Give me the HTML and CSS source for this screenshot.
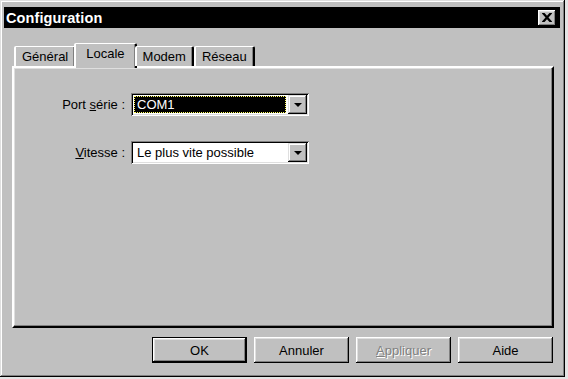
FILE: index.html
```html
<!DOCTYPE html>
<html lang="fr">
<head>
<meta charset="utf-8">
<title>Configuration</title>
<link rel="stylesheet" href="styles.css">
</head>
<body>
<div class="window">
  <div class="titlebar">
    <span class="title">Configuration</span>
    <span class="close-btn">
      <svg width="10" height="9" viewBox="0 0 10 9"><path d="M0 0h2.5L5 2.7 7.5 0H10v.6L6.5 4.5 10 8.4V9H7.5L5 6.3 2.5 9H0v-.6l3.5-3.9L0 .6z" fill="#000"/></svg>
    </span>
  </div>
  <div class="content">
    <div class="tabs">
      <div class="tab">Général</div>
      <div class="tab tab-active">Locale</div>
      <div class="tab">Modem</div>
      <div class="tab">Réseau</div>
    </div>
    <div class="panel">
      <div class="form">
        <label class="label">Port <u>s</u>érie :</label>
        <div class="combo">
          <div class="combo-field"><span class="selected">COM1</span></div>
          <div class="combo-btn"><span class="arrow"></span></div>
        </div>
        <label class="label"><u>V</u>itesse :</label>
        <div class="combo">
          <div class="combo-field"><span class="plain">Le plus vite possible</span></div>
          <div class="combo-btn"><span class="arrow"></span></div>
        </div>
      </div>
    </div>
    <div class="buttons">
      <button class="btn btn-default">OK</button>
      <button class="btn">Annuler</button>
      <button class="btn btn-disabled"><u>A</u>ppliquer</button>
      <button class="btn">Aide</button>
    </div>
  </div>
</div>
</body>
</html>
```

FILE: styles.css
```css
html, body {
  margin: 0;
  padding: 0;
  background: #e4e4e4;
}
body {
  width: 568px;
  height: 379px;
  overflow: hidden;
  font-family: "Liberation Sans", Arial, sans-serif;
  font-size: 13px;
  color: #000;
}
.window {
  box-sizing: border-box;
  width: 565px;
  height: 377px;
  background: #c0c0c0;
  padding: 7px 5px 2px 4px;
  box-shadow: inset -1px -1px #000, inset 1px 1px #dfdfdf, inset -2px -2px #808080, inset 2px 2px #fff;
}
.titlebar {
  height: 21px;
  background: #000;
  display: flex;
  align-items: center;
  justify-content: space-between;
  padding: 0 4px 0 2px;
}
.title {
  color: #fff;
  font-weight: bold;
  font-size: 14.5px;
  letter-spacing: 0.1px;
}
.close-btn {
  box-sizing: border-box;
  width: 18px;
  height: 16px;
  background: #c0c0c0;
  display: flex;
  align-items: center;
  justify-content: center;
  box-shadow: inset -1px -1px #000, inset 1px 1px #fff, inset -2px -2px #808080, inset 2px 2px #dfdfdf;
}
.content {
  padding: 15px 6px 0 8px;
}
.tabs {
  display: flex;
  align-items: flex-end;
  height: 23px;
  padding-left: 2px;
  position: relative;
  z-index: 1;
}
.tab {
  box-sizing: border-box;
  height: 20px;
  padding: 1px 6px 0 6px;
  line-height: 18px;
  background: #c0c0c0;
  border-top: 1px solid #fff;
  border-left: 2px solid #fff;
  border-right: 2px solid #000;
  border-radius: 2px 2px 0 0;
  box-shadow: inset -1px 0 #808080;
}
.tab-active {
  height: 25px;
  margin: 0 -2px -2px -2px;
  padding: 0 10px 3px 10px;
  line-height: 19px;
}
.panel {
  box-sizing: border-box;
  height: 262px;
  width: 542px;
  border-top: 2px solid #fff;
  border-left: 2px solid #fff;
  border-right: 2px solid #000;
  border-bottom: 2px solid #000;
  box-shadow: inset -1px -1px #808080, inset 1px 1px #dfdfdf;
}
.form {
  display: grid;
  grid-template-columns: 111px 178px;
  grid-auto-rows: 23px;
  column-gap: 6px;
  row-gap: 25px;
  padding-top: 25px;
  align-items: center;
}
.label {
  text-align: right;
  color: #000;
}
.combo {
  box-sizing: border-box;
  height: 23px;
  display: flex;
  padding: 2px;
  background: #fff;
  box-shadow: inset 1px 1px #808080, inset -1px -1px #fff, inset 2px 2px #000, inset -2px -2px #dfdfdf;
}
.combo-field {
  flex: 1;
  display: flex;
  align-items: stretch;
  padding: 1px 2px 1px 1px;
}
.selected {
  flex: 1;
  background: #000;
  color: #fff;
  outline: 1px dotted #ffff60;
  outline-offset: -1px;
  line-height: 17px;
  padding-left: 3px;
}
.plain {
  line-height: 17px;
  padding-left: 3px;
}
.combo-btn {
  box-sizing: border-box;
  width: 19px;
  background: #c0c0c0;
  display: flex;
  align-items: center;
  justify-content: center;
  box-shadow: inset -1px -1px #000, inset 1px 1px #dfdfdf, inset -2px -2px #808080, inset 2px 2px #fff;
}
.arrow {
  width: 0;
  height: 0;
  border-left: 4px solid transparent;
  border-right: 4px solid transparent;
  border-top: 4px solid #000;
  margin-top: 1px;
}
.buttons {
  display: flex;
  justify-content: flex-end;
  gap: 7px;
  padding-top: 9px;
  padding-right: 1px;
}
.btn {
  box-sizing: border-box;
  width: 95px;
  height: 26px;
  font-family: "Liberation Sans", Arial, sans-serif;
  font-size: 13px;
  color: #000;
  background: #c0c0c0;
  border: none;
  padding: 0;
  box-shadow: inset -1px -1px #000, inset 1px 1px #fff, inset -2px -2px #808080, inset 2px 2px #dfdfdf;
}
.btn-default {
  box-shadow: inset 0 0 0 1px #000, inset -2px -2px #000, inset 2px 2px #fff, inset -3px -3px #808080, inset 3px 3px #dfdfdf;
}
.btn-disabled {
  color: #808080;
  text-shadow: 1px 1px #fff;
}
```
